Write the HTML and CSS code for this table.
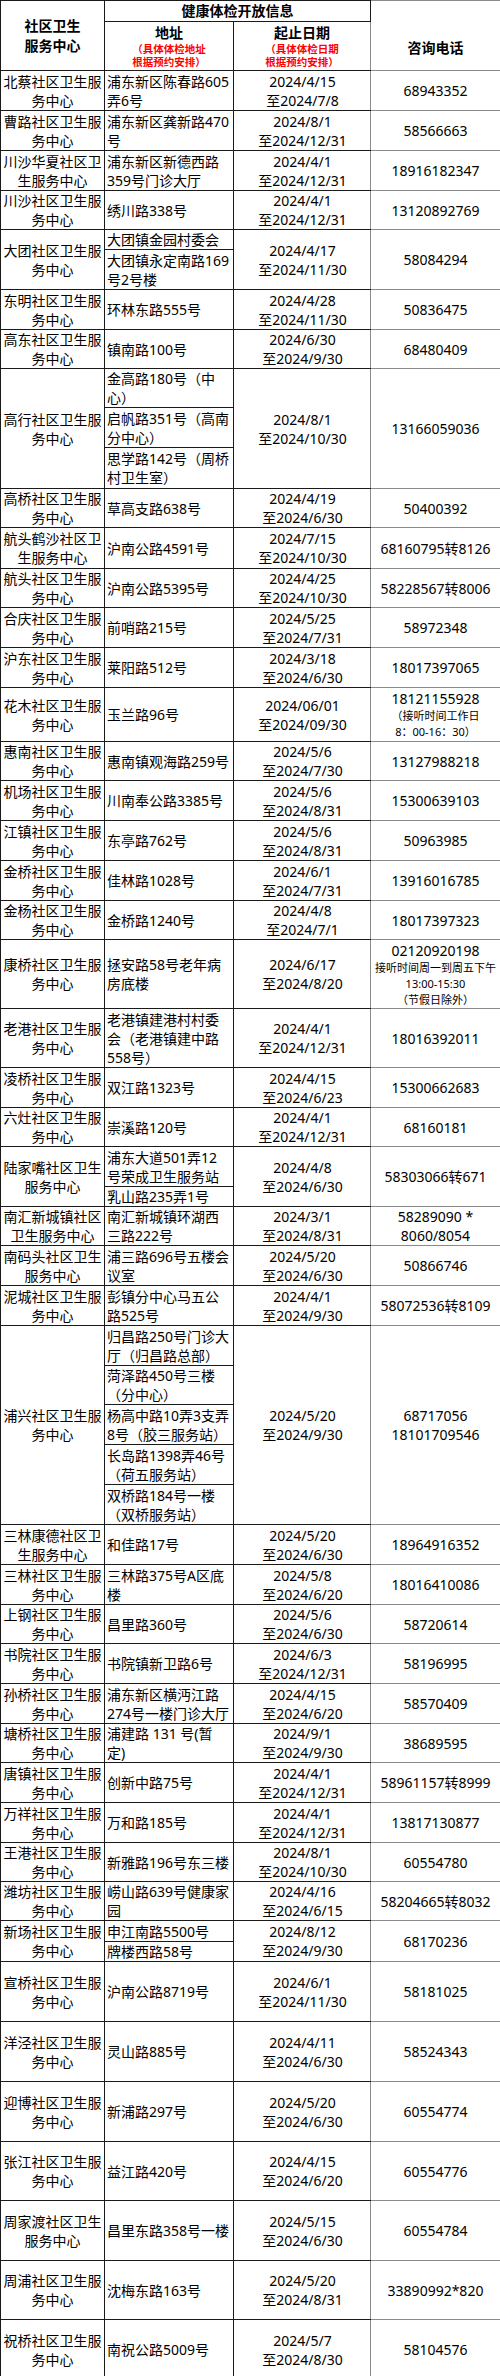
FILE: index.html
```html
<!DOCTYPE html>
<html lang="zh-CN">
<head>
<meta charset="utf-8">
<title>健康体检开放信息</title>
<link rel="stylesheet" href="styles.css">
</head>
<body>
<table class="sheet">
<colgroup><col class="c1"><col class="c2"><col class="c3"><col class="c4"></colgroup>
<thead>
<tr class="h21"><th class="n" rowspan="2">社区卫生<br>服务中心</th><th class="top" colspan="2">健康体检开放信息</th><th class="blank"></th></tr>
<tr class="h49"><th class="ha"><div class="hd">地址</div><div class="red">（具体体检地址<br>根据预约安排）</div></th><th class="d"><div class="hd">起止日期</div><div class="red">（具体体检日期<br>根据预约安排）</div></th><th class="p hp">咨询电话</th></tr>
</thead>
<tbody>
<tr class="h40"><td class="n">北蔡社区卫生服<br>务中心</td><td class="a">浦东新区陈春路605<br>弄6号</td><td class="d">2024/4/15<br>至2024/7/8</td><td class="p">68943352</td></tr>
<tr class="h40"><td class="n">曹路社区卫生服<br>务中心</td><td class="a">浦东新区龚新路470<br>号</td><td class="d">2024/8/1<br>至2024/12/31</td><td class="p">58566663</td></tr>
<tr class="h40"><td class="n">川沙华夏社区卫<br>生服务中心</td><td class="a">浦东新区新德西路<br>359号门诊大厅</td><td class="d">2024/4/1<br>至2024/12/31</td><td class="p">18916182347</td></tr>
<tr class="h39"><td class="n">川沙社区卫生服<br>务中心</td><td class="a">绣川路338号</td><td class="d">2024/4/1<br>至2024/12/31</td><td class="p">13120892769</td></tr>
<tr class="h20"><td class="n" rowspan="2">大团社区卫生服<br>务中心</td><td class="a">大团镇金园村委会</td><td class="d" rowspan="2">2024/4/17<br>至2024/11/30</td><td class="p" rowspan="2">58084294</td></tr>
<tr class="h40"><td class="a">大团镇永定南路169<br>号2号楼</td></tr>
<tr class="h40"><td class="n">东明社区卫生服<br>务中心</td><td class="a">环林东路555号</td><td class="d">2024/4/28<br>至2024/11/30</td><td class="p">50836475</td></tr>
<tr class="h39"><td class="n">高东社区卫生服<br>务中心</td><td class="a">镇南路100号</td><td class="d">2024/6/30<br>至2024/9/30</td><td class="p">68480409</td></tr>
<tr class="h39"><td class="n" rowspan="3">高行社区卫生服<br>务中心</td><td class="a">金高路180号（中<br>心）</td><td class="d" rowspan="3">2024/8/1<br>至2024/10/30</td><td class="p" rowspan="3">13166059036</td></tr>
<tr class="h40"><td class="a">启帆路351号（高南<br>分中心）</td></tr>
<tr class="h41"><td class="a">思学路142号（周桥<br>村卫生室）</td></tr>
<tr class="h39"><td class="n">高桥社区卫生服<br>务中心</td><td class="a">草高支路638号</td><td class="d">2024/4/19<br>至2024/6/30</td><td class="p">50400392</td></tr>
<tr class="h41"><td class="n">航头鹤沙社区卫<br>生服务中心</td><td class="a">沪南公路4591号</td><td class="d">2024/7/15<br>至2024/10/30</td><td class="p">68160795转8126</td></tr>
<tr class="h39"><td class="n">航头社区卫生服<br>务中心</td><td class="a">沪南公路5395号</td><td class="d">2024/4/25<br>至2024/10/30</td><td class="p">58228567转8006</td></tr>
<tr class="h40"><td class="n">合庆社区卫生服<br>务中心</td><td class="a">前哨路215号</td><td class="d">2024/5/25<br>至2024/7/31</td><td class="p">58972348</td></tr>
<tr class="h40"><td class="n">沪东社区卫生服<br>务中心</td><td class="a">莱阳路512号</td><td class="d">2024/3/18<br>至2024/6/30</td><td class="p">18017397065</td></tr>
<tr class="h54"><td class="n">花木社区卫生服<br>务中心</td><td class="a">玉兰路96号</td><td class="d">2024/06/01<br>至2024/09/30</td><td class="p">18121155928<div class="sm">（接听时间工作日<br>8：00-16：30）</div></td></tr>
<tr class="h37"><td class="n">惠南社区卫生服<br>务中心</td><td class="a">惠南镇观海路259号</td><td class="d">2024/5/6<br>至2024/7/30</td><td class="p">13127988218</td></tr>
<tr class="h40"><td class="n">机场社区卫生服<br>务中心</td><td class="a">川南奉公路3385号</td><td class="d">2024/5/6<br>至2024/8/31</td><td class="p">15300639103</td></tr>
<tr class="h40"><td class="n">江镇社区卫生服<br>务中心</td><td class="a">东亭路762号</td><td class="d">2024/5/6<br>至2024/8/31</td><td class="p">50963985</td></tr>
<tr class="h40"><td class="n">金桥社区卫生服<br>务中心</td><td class="a">佳林路1028号</td><td class="d">2024/6/1<br>至2024/7/31</td><td class="p">13916016785</td></tr>
<tr class="h39"><td class="n">金杨社区卫生服<br>务中心</td><td class="a">金桥路1240号</td><td class="d">2024/4/8<br>至2024/7/1</td><td class="p">18017397323</td></tr>
<tr class="h69"><td class="n">康桥社区卫生服<br>务中心</td><td class="a">拯安路58号老年病<br>房底楼</td><td class="d">2024/6/17<br>至2024/8/20</td><td class="p">02120920198<div class="sm">接听时间周一到周五下午<br>13:00-15:30<br>（节假日除外）</div></td></tr>
<tr class="h59"><td class="n">老港社区卫生服<br>务中心</td><td class="a">老港镇建港村村委<br>会（老港镇建中路<br>558号）</td><td class="d">2024/4/1<br>至2024/12/31</td><td class="p">18016392011</td></tr>
<tr class="h40"><td class="n">凌桥社区卫生服<br>务中心</td><td class="a">双江路1323号</td><td class="d">2024/4/15<br>至2024/6/23</td><td class="p">15300662683</td></tr>
<tr class="h39"><td class="n">六灶社区卫生服<br>务中心</td><td class="a">崇溪路120号</td><td class="d">2024/4/1<br>至2024/12/31</td><td class="p">68160181</td></tr>
<tr class="h40"><td class="n" rowspan="2">陆家嘴社区卫生<br>服务中心</td><td class="a">浦东大道501弄12<br>号荣成卫生服务站</td><td class="d" rowspan="2">2024/4/8<br>至2024/6/30</td><td class="p" rowspan="2">58303066转671</td></tr>
<tr class="h20"><td class="a">乳山路235弄1号</td></tr>
<tr class="h39"><td class="n">南汇新城镇社区<br>卫生服务中心</td><td class="a">南汇新城镇环湖西<br>三路222号</td><td class="d">2024/3/1<br>至2024/8/31</td><td class="p">58289090 *<br>8060/8054</td></tr>
<tr class="h40"><td class="n">南码头社区卫生<br>服务中心</td><td class="a">浦三路696号五楼会<br>议室</td><td class="d">2024/5/20<br>至2024/6/30</td><td class="p">50866746</td></tr>
<tr class="h40"><td class="n">泥城社区卫生服<br>务中心</td><td class="a">彭镇分中心马五公<br>路525号</td><td class="d">2024/4/1<br>至2024/9/30</td><td class="p">58072536转8109</td></tr>
<tr class="h40"><td class="n" rowspan="5">浦兴社区卫生服<br>务中心</td><td class="a">归昌路250号门诊大<br>厅（归昌路总部）</td><td class="d" rowspan="5">2024/5/20<br>至2024/9/30</td><td class="p" rowspan="5">68717056<br>18101709546</td></tr>
<tr class="h39"><td class="a">菏泽路450号三楼<br>（分中心）</td></tr>
<tr class="h40"><td class="a">杨高中路10弄3支弄<br>8号（胶三服务站）</td></tr>
<tr class="h40"><td class="a">长岛路1398弄46号<br>（荷五服务站）</td></tr>
<tr class="h40"><td class="a">双桥路184号一楼<br>（双桥服务站）</td></tr>
<tr class="h40"><td class="n">三林康德社区卫<br>生服务中心</td><td class="a">和佳路17号</td><td class="d">2024/5/20<br>至2024/6/30</td><td class="p">18964916352</td></tr>
<tr class="h40"><td class="n">三林社区卫生服<br>务中心</td><td class="a">三林路375号A区底<br>楼</td><td class="d">2024/5/8<br>至2024/6/20</td><td class="p">18016410086</td></tr>
<tr class="h39"><td class="n">上钢社区卫生服<br>务中心</td><td class="a">昌里路360号</td><td class="d">2024/5/6<br>至2024/6/30</td><td class="p">58720614</td></tr>
<tr class="h40"><td class="n">书院社区卫生服<br>务中心</td><td class="a">书院镇新卫路6号</td><td class="d">2024/6/3<br>至2024/12/31</td><td class="p">58196995</td></tr>
<tr class="h40"><td class="n">孙桥社区卫生服<br>务中心</td><td class="a">浦东新区横沔江路<br>274号一楼门诊大厅</td><td class="d">2024/4/15<br>至2024/6/20</td><td class="p">58570409</td></tr>
<tr class="h39"><td class="n">塘桥社区卫生服<br>务中心</td><td class="a">浦建路 131 号(暂<br>定)</td><td class="d">2024/9/1<br>至2024/9/30</td><td class="p">38689595</td></tr>
<tr class="h40"><td class="n">唐镇社区卫生服<br>务中心</td><td class="a">创新中路75号</td><td class="d">2024/4/1<br>至2024/12/31</td><td class="p">58961157转8999</td></tr>
<tr class="h40"><td class="n">万祥社区卫生服<br>务中心</td><td class="a">万和路185号</td><td class="d">2024/4/1<br>至2024/12/31</td><td class="p">13817130877</td></tr>
<tr class="h39"><td class="n">王港社区卫生服<br>务中心</td><td class="a">新雅路196号东三楼</td><td class="d">2024/8/1<br>至2024/10/30</td><td class="p">60554780</td></tr>
<tr class="h39"><td class="n">潍坊社区卫生服<br>务中心</td><td class="a">崂山路639号健康家<br>园</td><td class="d">2024/4/16<br>至2024/6/15</td><td class="p">58204665转8032</td></tr>
<tr class="h21"><td class="n" rowspan="2">新场社区卫生服<br>务中心</td><td class="a">申江南路5500号</td><td class="d" rowspan="2">2024/8/12<br>至2024/9/30</td><td class="p" rowspan="2">68170236</td></tr>
<tr class="h19"><td class="a">牌楼西路58号</td></tr>
<tr class="h60"><td class="n">宣桥社区卫生服<br>务中心</td><td class="a">沪南公路8719号</td><td class="d">2024/6/1<br>至2024/11/30</td><td class="p">58181025</td></tr>
<tr class="h60"><td class="n">洋泾社区卫生服<br>务中心</td><td class="a">灵山路885号</td><td class="d">2024/4/11<br>至2024/6/30</td><td class="p">58524343</td></tr>
<tr class="h60"><td class="n">迎博社区卫生服<br>务中心</td><td class="a">新浦路297号</td><td class="d">2024/5/20<br>至2024/6/30</td><td class="p">60554774</td></tr>
<tr class="h59"><td class="n">张江社区卫生服<br>务中心</td><td class="a">益江路420号</td><td class="d">2024/4/15<br>至2024/6/20</td><td class="p">60554776</td></tr>
<tr class="h60"><td class="n">周家渡社区卫生<br>服务中心</td><td class="a">昌里东路358号一楼</td><td class="d">2024/5/15<br>至2024/6/30</td><td class="p">60554784</td></tr>
<tr class="h59"><td class="n">周浦社区卫生服<br>务中心</td><td class="a">沈梅东路163号</td><td class="d">2024/5/20<br>至2024/8/31</td><td class="p">33890992*820</td></tr>
<tr class="h60"><td class="n">祝桥社区卫生服<br>务中心</td><td class="a">南祝公路5009号</td><td class="d">2024/5/7<br>至2024/8/30</td><td class="p">58104576</td></tr>
</tbody>
</table>
</body>
</html>
```

FILE: styles.css
```css
html, body {
  margin: 0;
  padding: 0;
  background: #ffffff;
}

.sheet {
  width: 500px;
  border-collapse: collapse;
  table-layout: fixed;
  font-family: "Noto Sans", "Noto Sans CJK SC", sans-serif;
  font-size: 14px;
  line-height: 19px;
  color: #000000;
}

.c1 { width: 104px; }
.c2 { width: 129px; }
.c3 { width: 137px; }
.c4 { width: 130px; }

.sheet td,
.sheet th {
  border: 1px solid #1a1a1a;
  padding: 0 1px 0 2px;
  vertical-align: middle;
  white-space: nowrap;
  overflow: hidden;
}

.sheet th {
  font-weight: bold;
  text-align: center;
  line-height: 20px;
  padding: 0;
}

.sheet th.blank {
  border-bottom: hidden;
  border-color: #8a8a8a;
}

.sheet th.d {
  border-right-color: #8a8a8a;
}

.sheet th.p {
  border-color: #8a8a8a;
}

.hp {
  padding-top: 4px !important;
}

.hd {
  line-height: 20px;
}

.red {
  color: #ff0000;
  font-size: 10.5px;
  line-height: 13px;
}

td.n {
  text-align: center;
  padding: 0;
}

td.a {
  text-align: left;
}

td.d {
  text-align: center;
  border-right-color: #8a8a8a;
}

td.p {
  text-align: center;
  border-color: #8a8a8a;
  padding: 0;
}

.sm {
  font-size: 11px;
  line-height: 16px;
}

.h19 { height: 19px; }
.h20 { height: 20px; }
.h21 { height: 21px; }
.h37 { height: 37px; }
.h39 { height: 39px; }
.h40 { height: 40px; }
.h41 { height: 41px; }
.h49 { height: 49px; }
.h54 { height: 54px; }
.h59 { height: 59px; }
.h60 { height: 60px; }
.h69 { height: 69px; }
```
